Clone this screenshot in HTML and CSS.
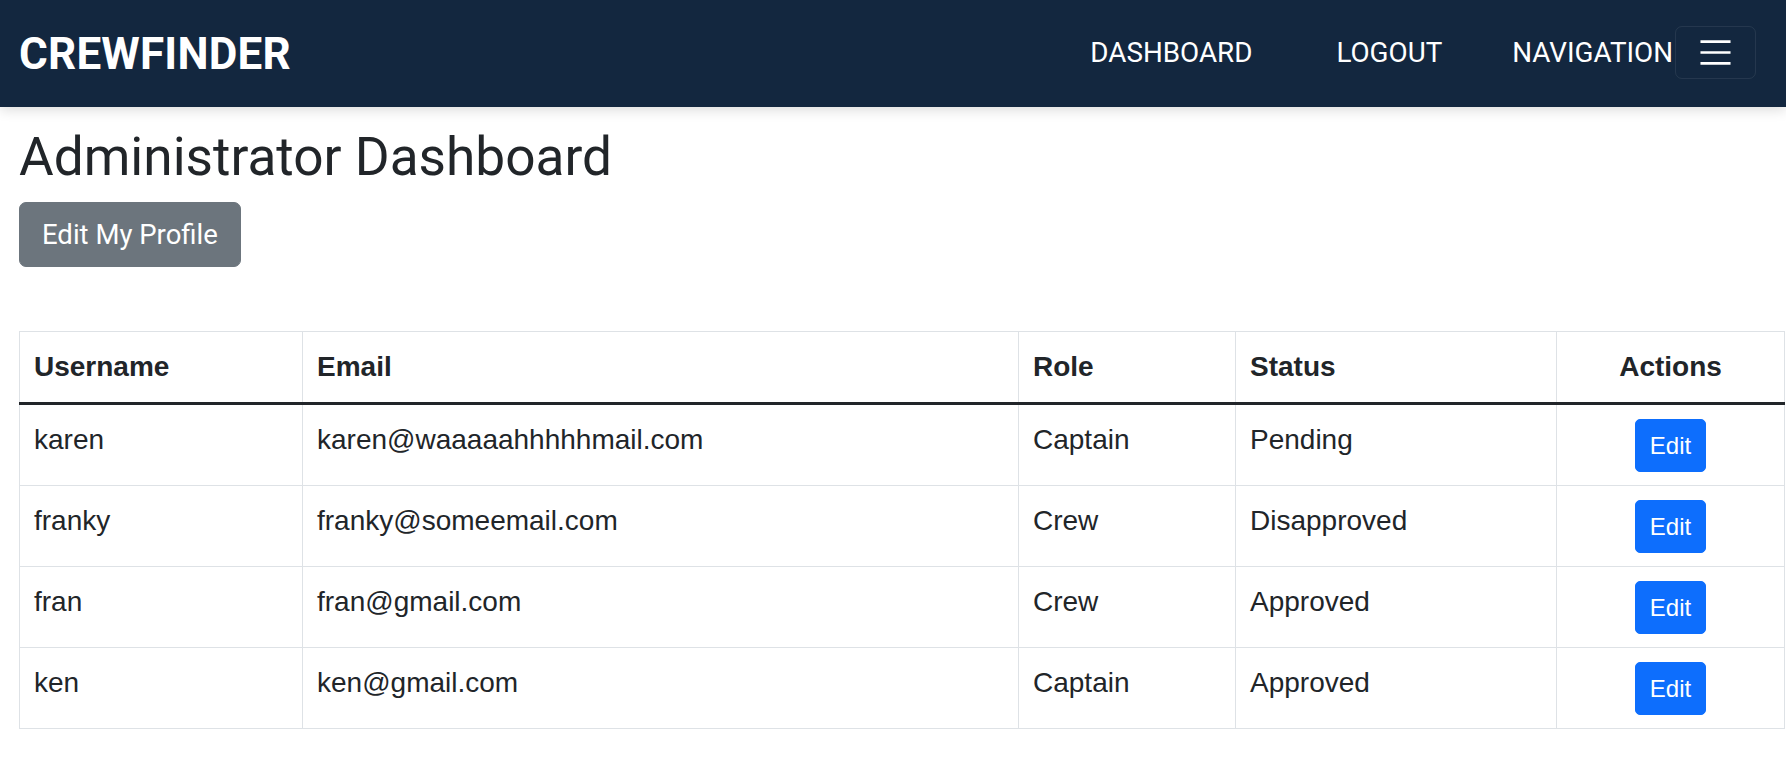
FILE: index.html
```html
<!DOCTYPE html>
<html lang="en">
<head>
<meta charset="utf-8">
<title>CrewFinder - Administrator Dashboard</title>
<link rel="stylesheet" href="styles.css">
</head>
<body>
<nav class="navbar">
  <a class="brand" href="#">CREWFINDER</a>
  <ul class="nav-links">
    <li class="nav-item nav-dashboard"><a href="#">DASHBOARD</a></li>
    <li class="nav-item nav-logout"><a href="#">LOGOUT</a></li>
    <li class="nav-item nav-navigation"><span>NAVIGATION</span>
      <button class="toggler" type="button" aria-label="Toggle navigation">
        <svg class="toggler-icon" viewBox="0 0 30 30" width="41" height="41"><path d="M4 7h22M4 15h22M4 23h22" stroke="#ffffff" stroke-width="2" stroke-linecap="butt" fill="none"/></svg>
      </button>
    </li>
  </ul>
</nav>
<main class="content">
  <h1 class="page-title">Administrator Dashboard</h1>
  <button class="btn-profile" type="button">Edit My Profile</button>
  <table class="users">
    <colgroup>
      <col class="c-user"><col class="c-email"><col class="c-role"><col class="c-status"><col class="c-actions">
    </colgroup>
    <thead>
      <tr><th>Username</th><th>Email</th><th>Role</th><th>Status</th><th class="center">Actions</th></tr>
    </thead>
    <tbody>
      <tr><td>karen</td><td>karen@waaaaahhhhhmail.com</td><td>Captain</td><td>Pending</td><td class="center"><button class="btn-edit" type="button">Edit</button></td></tr>
      <tr><td>franky</td><td>franky@someemail.com</td><td>Crew</td><td>Disapproved</td><td class="center"><button class="btn-edit" type="button">Edit</button></td></tr>
      <tr><td>fran</td><td>fran@gmail.com</td><td>Crew</td><td>Approved</td><td class="center"><button class="btn-edit" type="button">Edit</button></td></tr>
      <tr><td>ken</td><td>ken@gmail.com</td><td>Captain</td><td>Approved</td><td class="center"><button class="btn-edit" type="button">Edit</button></td></tr>
    </tbody>
  </table>
</main>
</body>
</html>
```
FILE: styles.css
```css
* { box-sizing: border-box; }
html, body { margin: 0; padding: 0; }
body {
  font-family: Roboto, "Liberation Sans", Arial, sans-serif;
  color: #212529;
  background: #ffffff;
}

.navbar {
  height: 107px;
  background: #13273f;
  display: flex;
  align-items: center;
  padding: 0 30px 0 19px;
  box-shadow: 0 3px 12px rgba(0, 0, 0, 0.14);
  position: relative;
}
.brand {
  font-family: Roboto, sans-serif;
  font-weight: 700;
  font-size: 44px;
  color: #ffffff;
  text-decoration: none;
  letter-spacing: 0.2px;
}
.nav-links {
  list-style: none;
  margin: 0 0 0 auto;
  padding: 0;
  display: flex;
  align-items: center;
}
.nav-item {
  display: flex;
  align-items: center;
  font-family: Roboto, sans-serif;
  font-size: 27.8px;
  color: #ffffff;
  margin-top: -2px;
}
.nav-item a { color: #ffffff; text-decoration: none; }
.nav-logout { margin-left: 84px; }
.nav-navigation { margin-left: 70px; }
.toggler {
  margin-left: 2px;
  width: 81px;
  height: 53px;
  padding: 0;
  background: transparent;
  border: 1px solid rgba(255, 255, 255, 0.08);
  border-radius: 7px;
  display: flex;
  align-items: center;
  justify-content: center;
}
.toggler-icon { display: block; }

.content { padding: 0 0 0 19px; }
.page-title {
  font-family: Roboto, sans-serif;
  font-weight: 400;
  font-size: 53.2px;
  line-height: 66px;
  margin: 17px 0 12px;
  color: #212529;
}
.btn-profile {
  display: block;
  font-family: Roboto, sans-serif;
  font-size: 27.5px;
  line-height: 41px;
  padding: 11px 22px;
  color: #ffffff;
  background: #6c757d;
  border: 1px solid #6c757d;
  border-radius: 7px;
  margin: 0 0 64px;
}

.users {
  width: 1765px;
  table-layout: fixed;
  border-collapse: collapse;
  font-family: "Liberation Sans", Arial, sans-serif;
  font-size: 28px;
  line-height: 42px;
  color: #212529;
  border: 1px solid #dee2e6;
}
.c-user { width: 283px; }
.c-email { width: 716px; }
.c-role { width: 217px; }
.c-status { width: 321px; }
.c-actions { width: 228px; }
.users th, .users td {
  border: 1px solid #dee2e6;
  padding: 14px 14px 13px;
  text-align: left;
  vertical-align: top;
}
.users th { font-weight: 700; padding-bottom: 14px; }
.users thead th { border-bottom: 3px solid #212529; }
.users .center { text-align: center; }
.btn-edit {
  font-family: "Liberation Sans", Arial, sans-serif;
  font-size: 24px;
  line-height: 36px;
  padding: 7.5px 14px;
  color: #ffffff;
  background: #0d6efd;
  border: 1px solid #0d6efd;
  border-radius: 5px;
  vertical-align: top;
}
```
